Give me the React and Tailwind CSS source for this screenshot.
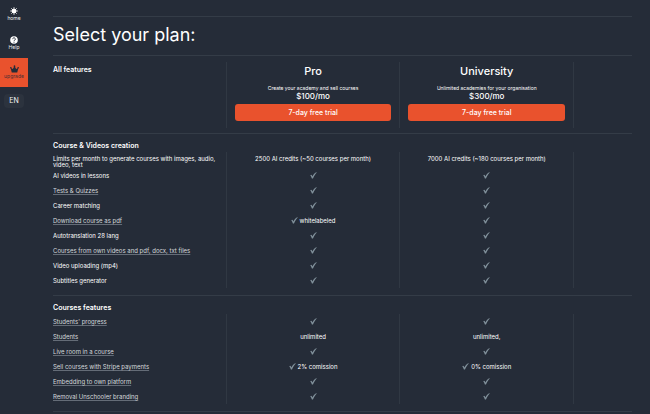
const plans = [
  { name: 'Pro', note: 'Create your academy and sell courses', price: '$100/mo' },
  { name: 'University', note: 'Unlimited academies for your organisation', price: '$300/mo' },
];

const sections = [
  {
    id: 'creation',
    title: 'Course & Videos creation',
    rows: [
      {
        label: 'Limits per month to generate courses with images, audio, video, text',
        tall: true,
        cells: [{ text: '2500 AI credits (~50 courses per month)' }, { text: '7000 AI credits (~180 courses per month)' }],
      },
      { label: 'AI videos in lessons' },
      { label: 'Tests & Quizzes', link: true },
      { label: 'Career matching' },
      { label: 'Download course as pdf', link: true, cells: [{ check: true, text: 'whitelabeled' }, { check: true }] },
      { label: 'Autotranslation 28 lang' },
      { label: 'Courses from own videos and pdf, docx, txt files', link: true },
      { label: 'Video uploading (mp4)' },
      { label: 'Subtitles generator' },
    ],
  },
  {
    id: 'features',
    title: 'Courses features',
    rows: [
      { label: "Students' progress", link: true },
      { label: 'Students', link: true, cells: [{ text: 'unlimited' }, { text: 'unlimited,' }] },
      { label: 'Live room in a course', link: true },
      { label: 'Sell courses with Stripe payments', link: true, cells: [{ check: true, text: '2% comission' }, { check: true, text: '0% comission' }] },
      { label: 'Embedding to own platform', link: true },
      { label: 'Removal Unschooler branding', link: true },
    ],
  },
];

const included = [{ check: true }, { check: true }];

function Check() {
  return (
    <svg viewBox="0 0 14 14" className="size-[7px] shrink-0" role="img" aria-label="included">
      <path d="M.6 6.400C1.600 5 3 5 3.600 6.600L4.600 9C6.600 5 9 2 12.400.4L13.600 1C10.400 4.400 8 8.200 6 13.200H3.800C3 10.600 2 8.200.6 6.400Z" fill="#82929c" />
    </svg>
  );
}

function SunIcon() {
  return (
    <svg viewBox="0 0 16 16" className="size-2" aria-hidden="true">
      <circle cx="8" cy="8" r="4.600" fill="#fff" />
      <path d="M8 .5v15M.5 8h15M2.700 2.700l10.600 10.600M13.300 2.700 2.700 13.300" stroke="#fff" strokeWidth="1.800" />
    </svg>
  );
}

function HelpIcon() {
  return (
    <svg viewBox="0 0 16 16" className="size-2" aria-hidden="true">
      <circle cx="8" cy="8" r="7.600" fill="#fff" />
      <path d="M5.400 6.200a2.600 2.600 0 1 1 4 2.200C8.300 9 8 9.300 8 10.200M8 11.600v1.800" fill="none" stroke="#252c38" strokeWidth="1.900" />
    </svg>
  );
}

function CrownIcon() {
  return (
    <svg viewBox="0 0 18 16" className="h-2 w-[9px]" aria-hidden="true">
      <path d="M3.500 15 1.200 5.500 5.600 8 9 1.800l3.400 6.200 4.400-2.500L14.500 15Z" fill="#252c38" />
      <circle cx="9" cy="2.400" r="1.700" fill="#252c38" />
      <circle cx="1.700" cy="5.600" r="1.600" fill="#252c38" />
      <circle cx="16.300" cy="5.600" r="1.600" fill="#252c38" />
    </svg>
  );
}

function NavLink({ icon, label, className }) {
  return (
    <a href="#" className={`flex h-[29px] w-full flex-col items-center justify-center text-[5px] leading-[7px] ${className}`}>
      {icon}
      {label}
    </a>
  );
}

function Columns() {
  return (
    <colgroup>
      <col className="w-[30%]" />
      <col className="w-[30%]" />
      <col className="w-[30%]" />
      <col className="w-[10%]" />
    </colgroup>
  );
}

function FeatureSection({ section }) {
  return (
    <section className="border-t border-[#343c47] pt-[6px] pb-[7px]">
      <h2 id={section.id} className="text-[7px] leading-[12px] font-semibold text-white">
        {section.title}
      </h2>
      <table aria-labelledby={section.id} className="w-full table-fixed border-separate border-spacing-0 text-[6px]">
        <Columns />
        <tbody>
          {section.rows.map((row) => {
            const cell = row.tall ? 'pt-1 align-top leading-[6px]' : 'leading-[15px]';
            return (
              <tr key={row.label} className={row.tall ? 'h-4' : 'h-[15px]'}>
                <th scope="row" className={`border-r border-[#303843] pr-1 text-left font-normal text-white ${cell}`}>
                  {row.link ? (
                    <a href="#" className="text-[#d5d9dc] underline decoration-[#646c77] decoration-1 underline-offset-1">
                      {row.label}
                    </a>
                  ) : (
                    row.label
                  )}
                </th>
                {(row.cells || included).map((value, i) => (
                  <td key={i} className={`border-r border-[#303843] text-white ${cell}`}>
                    <div className="flex items-center justify-center gap-0.5">
                      {value.check && <Check />}
                      {value.text}
                    </div>
                  </td>
                ))}
                <td />
              </tr>
            );
          })}
        </tbody>
      </table>
    </section>
  );
}

export default function App() {
  return (
    <div className="flex min-h-screen bg-[#252c38] font-['Inter','Liberation_Sans',sans-serif] text-white">
      <nav className="flex w-7 shrink-0 flex-col items-center">
        <NavLink icon={<SunIcon />} label="home" className="text-[#eceef0]" />
        <NavLink icon={<HelpIcon />} label="Help" className="text-[#eceef0]" />
        <NavLink icon={<CrownIcon />} label="upgrade" className="bg-[#e9522d] text-[#4a2f35]" />
        <button type="button" className="mt-[7px] w-5 rounded-sm bg-[#2c333e] text-[7px] leading-[14px] text-[#f1f2f3]">
          EN
        </button>
      </nav>
      <main className="mr-[18px] ml-[25px] flex-1 pt-4">
        <h1 className="border-t border-[#343c47] pb-[2px] text-[18px] leading-[36px]">Select your plan:</h1>
        <header className="grid grid-cols-[3fr_3fr_3fr_1fr] border-t border-[#343c47] pt-[6px] pb-[5px]">
          <h2 className="border-r border-[#303843] pt-[2px] text-[7px] leading-[12px] font-semibold">All features</h2>
          {plans.map((plan) => (
            <article key={plan.name} className="flex flex-col items-center border-r border-[#303843] px-2 pt-[2px] pb-[7px] text-center">
              <h3 className="text-[11px] leading-[14px] font-medium">{plan.name}</h3>
              <p className="mt-[6px] text-[5px] leading-[8px] text-white">{plan.note}</p>
              <p className="text-[8px] leading-[8px] font-medium">{plan.price}</p>
              <button type="button" className="mt-1 w-full rounded-[3px] bg-[#e9522d] text-[7px] leading-[17px] font-medium">
                7-day free trial
              </button>
            </article>
          ))}
        </header>
        {sections.map((section) => (
          <FeatureSection key={section.id} section={section} />
        ))}
        <hr className="border-[#343c47]" />
      </main>
    </div>
  );
}
